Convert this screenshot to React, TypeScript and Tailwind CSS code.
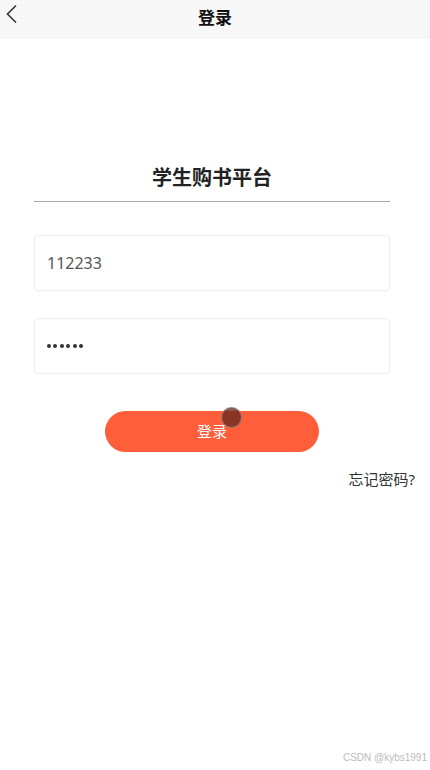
import React from "react";

export default function App() {
  const font = { fontFamily: '"Noto Sans", "Noto Sans CJK SC", sans-serif' };
  return (
    <div className="relative w-[430px] h-[770px] bg-white overflow-hidden" style={font}>
      <div className="relative h-[39px] bg-[#f7f7f7] flex items-center justify-center">
        <svg className="absolute left-[5px] top-[4px]" width="14" height="20" viewBox="0 0 14 20">
          <path d="M11 1.5 L2.5 10 L11 18.5" fill="none" stroke="#333" strokeWidth="1.6" />
        </svg>
        <span className="text-[17px] font-bold text-[#111] leading-none mt-[-5px]">登录</span>
      </div>
      <div className="px-[34px] pt-[125px] w-[424px]">
        <div className="text-center text-[20px] font-bold text-[#222] leading-[28px]">学生购书平台</div>
        <div className="mt-[9px] h-px bg-[#a9a9a9]" />
        <div className="mt-[33px] h-[56px] border border-[#ececec] rounded-[4px] flex items-center px-[12px] text-[16px] text-[#555]">
          112233
        </div>
        <div className="mt-[27px] h-[56px] border border-[#ececec] rounded-[4px] flex items-center px-[12px] text-[#333] gap-[2.4px]">
          {[0, 1, 2, 3, 4, 5].map((i) => (
            <span key={i} className="w-[4px] h-[4px] rounded-full bg-[#333]" />
          ))}
        </div>
      </div>
      <div className="flex justify-center mt-[37px] pr-[6px]">
        <div className="relative w-[214px] h-[41px] rounded-full bg-[#ff5e3a] flex items-center justify-center text-white text-[15px]">
          登录
          <span className="absolute left-[116px] top-[-4px] w-[21px] h-[21px] rounded-full bg-[#6b2a22]/80 border border-[#9a9a9a]/70" />
        </div>
      </div>
      <div className="flex justify-end pr-[15px] mt-[16px] text-[15px] text-[#333]">忘记密码?</div>
      <div className="absolute right-[3px] bottom-[5px] text-[10px] text-[#bbb]" style={{ fontFamily: '"Liberation Sans", sans-serif' }}>
        CSDN @kybs1991
      </div>
    </div>
  );
}
